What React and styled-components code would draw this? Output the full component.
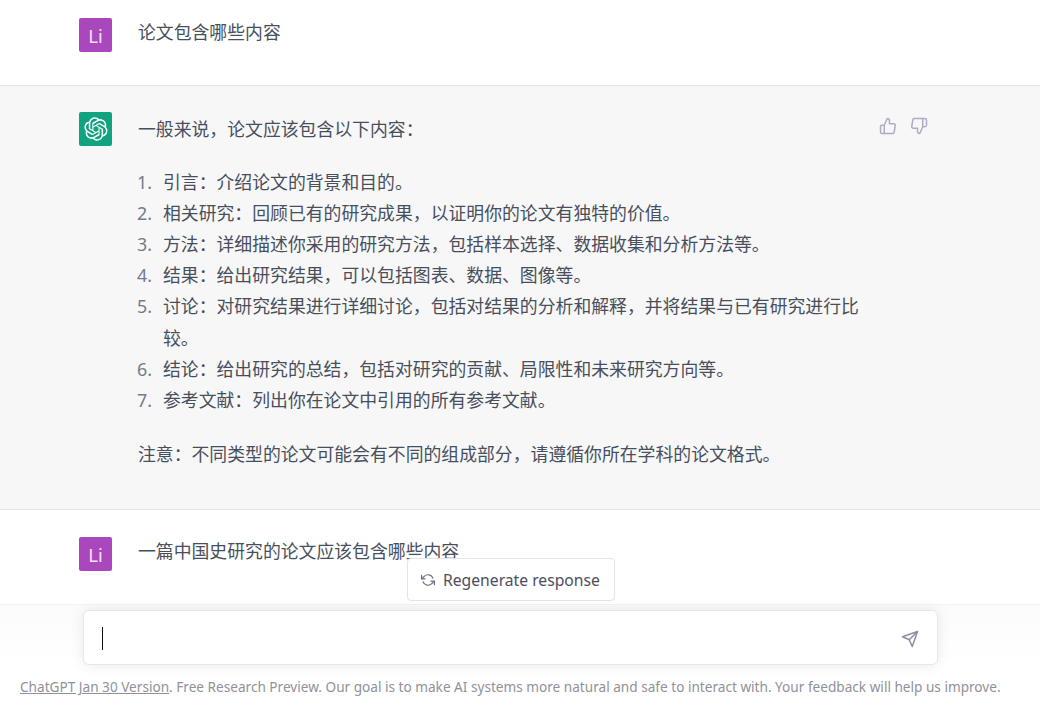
import React from "react";
import styled, { createGlobalStyle } from "styled-components";
import { FiThumbsUp, FiThumbsDown, FiSend, FiRefreshCcw } from "react-icons/fi";

const Global = createGlobalStyle`
  html, body { margin: 0; padding: 0; background: #fff; }
  body { font-family: "Noto Sans", "Noto Sans CJK SC", sans-serif; color: #484f5c; }
`;

const Page = styled.div`
  position: relative;
  width: 1040px;
  height: 720px;
  overflow: hidden;
`;

const Row = styled.div`
  display: flex;
  gap: 26px;
  box-sizing: border-box;
  height: ${(p) => p.$height}px;
  padding: ${(p) => p.$top}px 0 0 79px;
  background: ${(p) => (p.$alt ? "#f7f7f8" : "#fff")};
  border-bottom: ${(p) => (p.$last ? "0" : "1px solid #e3e4e8")};
`;

const Avatar = styled.div`
  flex: none;
  width: 33px;
  height: 34px;
  border-radius: 2px;
  display: flex;
  align-items: center;
  justify-content: center;
  color: #f3e3f7;
  font-size: 18.5px;
  background: ${(p) => p.$bg};
`;

const Body = styled.div`
  width: 722px;
  margin-top: ${(p) => p.$shift}px;
  font-size: 17.85px;
  line-height: 31.1px;
`;

const Para = styled.p`
  margin: ${(p) => p.$top || 0}px 0 0;
`;

const List = styled.ol`
  list-style: none;
  margin: 22px 0 0;
  padding: 0;
`;

const Item = styled.li`
  display: flex;
`;

const Num = styled.span`
  flex: none;
  width: 26px;
  margin-left: -1px;
  color: #737b89;
`;

const Text = styled.span`
  flex: 1;
`;

const Actions = styled.div`
  display: flex;
  gap: 13px;
  margin: 5px 0 0 -7px;
  height: 18px;
  color: #acacc2;
  font-size: 18px;
`;

const Bottom = styled.div`
  position: absolute;
  left: 0;
  right: 0;
  top: 604px;
  height: 116px;
  background: linear-gradient(180deg, #fbfbfb 0%, #fff 50%);
  border-top: 1px solid #f3f3f3;
  box-sizing: border-box;
`;

const Regen = styled.button`
  position: absolute;
  left: 407px;
  top: 558px;
  width: 208px;
  height: 43px;
  box-sizing: border-box;
  display: flex;
  align-items: center;
  gap: 8px;
  padding: 0 0 0 13px;
  background: #fff;
  border: 1px solid #e3e4e8;
  border-radius: 4px;
  color: #4d4e5c;
  font: 15.7px "Noto Sans", sans-serif;
`;

const RegenIcon = styled(FiRefreshCcw)`
  width: 14px;
  height: 14px;
  color: #6e6e80;
`;

const Composer = styled.div`
  position: absolute;
  left: 83px;
  top: 610px;
  width: 855px;
  height: 55px;
  box-sizing: border-box;
  display: flex;
  align-items: center;
  justify-content: space-between;
  padding: 2px 18px 0;
  background: #fff;
  border: 1px solid #e6e7ea;
  border-radius: 6px;
  box-shadow: 0 0 14px rgba(0, 0, 0, 0.09);
`;

const Caret = styled.span`
  width: 1px;
  height: 23px;
  background: #111;
`;

const SendIcon = styled(FiSend)`
  width: 18px;
  height: 18px;
  color: #8e8ea0;
`;

const Footer = styled.div`
  position: absolute;
  left: 20px;
  top: 678px;
  white-space: nowrap;
  font-size: 13.62px;
  line-height: 18px;
  color: #90919a;
`;

const FooterLink = styled.span`
  text-decoration: underline;
`;

const Logo = styled.svg`
  width: 24px;
  height: 24px;
`;

const items = [
  "引言：介绍论文的背景和目的。",
  "相关研究：回顾已有的研究成果，以证明你的论文有独特的价值。",
  "方法：详细描述你采用的研究方法，包括样本选择、数据收集和分析方法等。",
  "结果：给出研究结果，可以包括图表、数据、图像等。",
  "讨论：对研究结果进行详细讨论，包括对结果的分析和解释，并将结果与已有研究进行比较。",
  "结论：给出研究的总结，包括对研究的贡献、局限性和未来研究方向等。",
  "参考文献：列出你在论文中引用的所有参考文献。",
];

const logoPath =
  "M37.5324 16.8707C37.9808 15.5241 38.1363 14.0974 37.9886 12.6859C37.8409 11.2744 37.3934 9.91076 36.676 8.68622C35.6126 6.83404 33.9882 5.3676 32.0373 4.4985C30.0864 3.62941 27.9098 3.40259 25.8215 3.85078C24.8796 2.7893 23.7219 1.94125 22.4257 1.36341C21.1295 0.785575 19.7249 0.491269 18.3058 0.500197C16.1708 0.495044 14.0893 1.16803 12.3614 2.42214C10.6335 3.67624 9.34853 5.44666 8.6917 7.47815C7.30085 7.76286 5.98686 8.3414 4.8377 9.17505C3.68854 10.0087 2.73073 11.0782 2.02839 12.312C0.956464 14.1591 0.498905 16.2988 0.721698 18.4228C0.944492 20.5467 1.83612 22.5449 3.268 24.1293C2.81966 25.4759 2.66413 26.9026 2.81182 28.3141C2.95951 29.7256 3.40701 31.0892 4.12437 32.3138C5.18791 34.1659 6.8123 35.6322 8.76321 36.5013C10.7141 37.3704 12.8907 37.5973 14.9789 37.1492C15.9208 38.2107 17.0786 39.0587 18.3747 39.6366C19.6709 40.2144 21.0755 40.5087 22.4946 40.4998C24.6307 40.5054 26.7133 39.8321 28.4418 38.5772C30.1704 37.3223 31.4556 35.5506 32.1119 33.5179C33.5027 33.2332 34.8167 32.6547 35.9659 31.821C37.115 30.9874 38.0728 29.9178 38.7752 28.684C39.8458 26.8371 40.3023 24.6979 40.0789 22.5748C39.8556 20.4517 38.9639 18.4544 37.5324 16.8707ZM22.4978 37.8849C20.7443 37.8874 19.0459 37.2733 17.6994 36.1501C17.7601 36.117 17.8666 36.0586 17.936 36.0161L25.9004 31.4156C26.1003 31.3019 26.2663 31.137 26.3813 30.9378C26.4964 30.7386 26.5563 30.5124 26.5549 30.2825V19.0542L29.9213 20.998C29.9389 21.0068 29.9541 21.0198 29.9656 21.0359C29.977 21.052 29.9842 21.0707 29.9867 21.0902V30.3889C29.9842 32.375 29.1946 34.2791 27.7909 35.6841C26.3872 37.0892 24.4838 37.8806 22.4978 37.8849ZM6.39227 31.0064C5.51397 29.4888 5.19742 27.7107 5.49804 25.9832C5.55718 26.0187 5.66048 26.0818 5.73461 26.1244L13.699 30.7248C13.8975 30.8408 14.1233 30.902 14.3532 30.902C14.583 30.902 14.8088 30.8408 15.0073 30.7248L24.731 25.1103V28.9979C24.7321 29.0177 24.7283 29.0376 24.7199 29.0556C24.7115 29.0736 24.6988 29.0893 24.6829 29.1012L16.6317 33.7497C14.9096 34.7416 12.8643 35.0097 10.9447 34.4954C9.02506 33.9811 7.38785 32.7263 6.39227 31.0064ZM4.29707 13.6194C5.17156 12.0998 6.55279 10.9364 8.19885 10.3327C8.19885 10.4013 8.19491 10.5228 8.19491 10.6071V19.808C8.19351 20.0378 8.25334 20.2638 8.36823 20.4629C8.48312 20.6619 8.64893 20.8267 8.84863 20.9404L18.5723 26.5542L15.206 28.4979C15.1894 28.5089 15.1703 28.5155 15.1505 28.5173C15.1307 28.5191 15.1107 28.516 15.0924 28.5082L7.04046 23.8557C5.32135 22.8601 4.06716 21.2235 3.55289 19.3046C3.03862 17.3858 3.30624 15.3413 4.29707 13.6194ZM31.955 20.0556L22.2312 14.4411L25.5976 12.4981C25.6142 12.4872 25.6333 12.4805 25.6531 12.4787C25.6729 12.4769 25.6928 12.4801 25.7111 12.4879L33.7631 17.1364C34.9967 17.849 36.0017 18.8982 36.6606 20.1613C37.3194 21.4244 37.6047 22.849 37.4832 24.2684C37.3617 25.6878 36.8382 27.0432 35.9743 28.1759C35.1103 29.3086 33.9415 30.1717 32.6047 30.6641C32.6047 30.5947 32.6047 30.4733 32.6047 30.3889V21.188C32.6066 20.9586 32.5474 20.7328 32.4332 20.5338C32.319 20.3348 32.154 20.1698 31.955 20.0556ZM35.3055 15.0128C35.2464 14.9765 35.1431 14.9142 35.069 14.8717L27.1045 10.2712C26.906 10.1554 26.6803 10.0943 26.4504 10.0943C26.2206 10.0943 25.9948 10.1554 25.7963 10.2712L16.0726 15.8858V11.9982C16.0715 11.9783 16.0753 11.9585 16.0837 11.9405C16.0921 11.9225 16.1048 11.9068 16.1207 11.8949L24.1719 7.25025C25.4053 6.53903 26.8158 6.19376 28.2383 6.25482C29.6608 6.31589 31.0364 6.78077 32.2044 7.59508C33.3723 8.40939 34.2842 9.53945 34.8334 10.8531C35.3826 12.1667 35.5464 13.6095 35.3055 15.0128ZM14.2424 21.9419L10.8752 19.9981C10.8576 19.9893 10.8423 19.9763 10.8309 19.9602C10.8195 19.9441 10.8122 19.9254 10.8098 19.9058V10.6071C10.8107 9.18295 11.2173 7.78848 11.9819 6.58696C12.7466 5.38544 13.8377 4.42659 15.1275 3.82264C16.4173 3.21869 17.8524 2.99464 19.2649 3.1767C20.6775 3.35876 22.0089 3.93941 23.1034 4.85067C23.0427 4.88379 22.937 4.94215 22.8668 4.98473L14.9024 9.58517C14.7025 9.69878 14.5366 9.86356 14.4215 10.0626C14.3065 10.2616 14.2466 10.4877 14.2479 10.7175L14.2424 21.9419ZM16.071 17.9991L20.4018 15.4978L24.7325 17.9975V22.9985L20.4018 25.4983L16.071 22.9985V17.9991Z";

export default function App() {
  return (
    <Page>
      <Global />
      <Row $height={86} $top={18}>
        <Avatar $bg="#ab47bc">Li</Avatar>
        <Body $shift={-1}>
          <Para>论文包含哪些内容</Para>
        </Body>
      </Row>
      <Row $alt $height={424} $top={26}>
        <Avatar $bg="#10a37f">
          <Logo viewBox="0 0 41 41" fill="#fff">
            <path d={logoPath} />
          </Logo>
        </Avatar>
        <Body $shift={2}>
          <Para>一般来说，论文应该包含以下内容：</Para>
          <List>
            {items.map((t, i) => (
              <Item key={i}>
                <Num>{i + 1}.</Num>
                <Text>{t}</Text>
              </Item>
            ))}
          </List>
          <Para $top={23}>注意：不同类型的论文可能会有不同的组成部分，请遵循你所在学科的论文格式。</Para>
        </Body>
        <Actions>
          <FiThumbsUp />
          <FiThumbsDown />
        </Actions>
      </Row>
      <Row $last $height={210} $top={27}>
        <Avatar $bg="#ab47bc">Li</Avatar>
        <Body $shift={-1}>
          <Para>一篇中国史研究的论文应该包含哪些内容</Para>
        </Body>
      </Row>
      <Bottom />
      <Regen>
        <RegenIcon />
        Regenerate response
      </Regen>
      <Composer>
        <Caret />
        <SendIcon />
      </Composer>
      <Footer>
        <FooterLink>ChatGPT Jan 30 Version</FooterLink>. Free Research Preview. Our goal is to make AI systems more natural and safe to interact with. Your feedback will help us improve.
      </Footer>
    </Page>
  );
}
